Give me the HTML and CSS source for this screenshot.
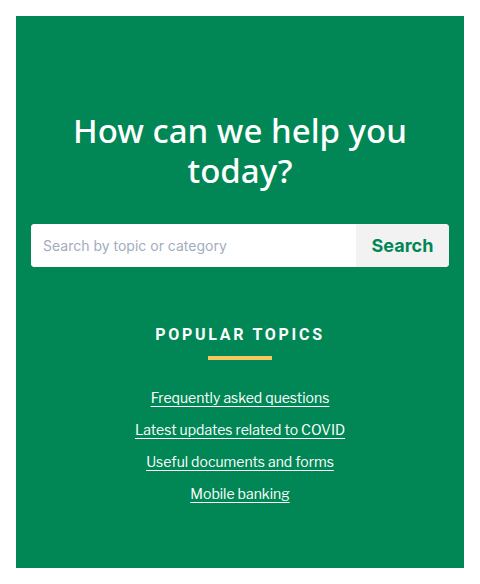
FILE: index.html
```html
<!DOCTYPE html>
<html lang="en">
<head>
<meta charset="utf-8">
<title>Help</title>
<link rel="stylesheet" href="styles.css">
</head>
<body>
<section class="hero">
  <h1 class="title">How can we help you today?</h1>
  <form class="search">
    <input class="search-input" type="text" placeholder="Search by topic or category">
    <button class="search-btn" type="button">Search</button>
  </form>
  <h2 class="topics-title">POPULAR TOPICS</h2>
  <div class="topics-bar"></div>
  <ul class="topics">
    <li><a href="#">Frequently asked questions</a></li>
    <li><a href="#">Latest updates related to COVID</a></li>
    <li><a href="#">Useful documents and forms</a></li>
    <li><a href="#">Mobile banking</a></li>
  </ul>
</section>
</body>
</html>
```

FILE: styles.css
```css
* { box-sizing: border-box; }
html, body { margin: 0; padding: 0; background: #fff; }
body { padding: 16px; font-family: "Libre Franklin", "Open Sans", "Noto Sans", sans-serif; }
.hero {
  background: #008755;
  height: 552px;
  padding: 95px 15px 64px;
  display: flex;
  flex-direction: column;
  align-items: center;
  color: #fff;
}
.title {
  margin: 0;
  font-family: "Noto Sans", sans-serif;
  font-weight: 500;
  font-size: 33px;
  line-height: 40px;
  text-align: center;
  width: 340px;
}
.search {
  margin-top: 33px;
  width: 100%;
  height: 43px;
  display: flex;
  border-radius: 4px;
  overflow: hidden;
  background: #fff;
}
.search-input {
  flex: 1;
  border: 0;
  outline: 0;
  padding: 0 12px;
  font-family: "Inter", sans-serif;
  font-size: 14px;
  color: #333;
  background: #fff;
}
.search-input::placeholder { color: #a3acbf; }
.search-btn {
  width: 93px;
  border: 0;
  background: #f2f2f2;
  color: #008755;
  font-family: "Inter", sans-serif;
  font-weight: 700;
  font-size: 18px;
  padding: 0;
}
.topics-title {
  margin: 58px 0 0;
  font-family: "Roboto", sans-serif;
  font-weight: 700;
  font-size: 16px;
  line-height: 20px;
  letter-spacing: 2.7px;
}
.topics-bar {
  width: 64px;
  height: 4px;
  background: #f9c760;
  margin-top: 11px;
}
.topics {
  list-style: none;
  margin: 28px 0 0;
  padding: 0;
  display: flex;
  flex-direction: column;
  align-items: center;
  gap: 12px;
}
.topics li { line-height: 20px; }
.topics a {
  color: #fff;
  font-size: 14px;
  text-decoration: underline;
  text-underline-offset: 3px;
}
```
